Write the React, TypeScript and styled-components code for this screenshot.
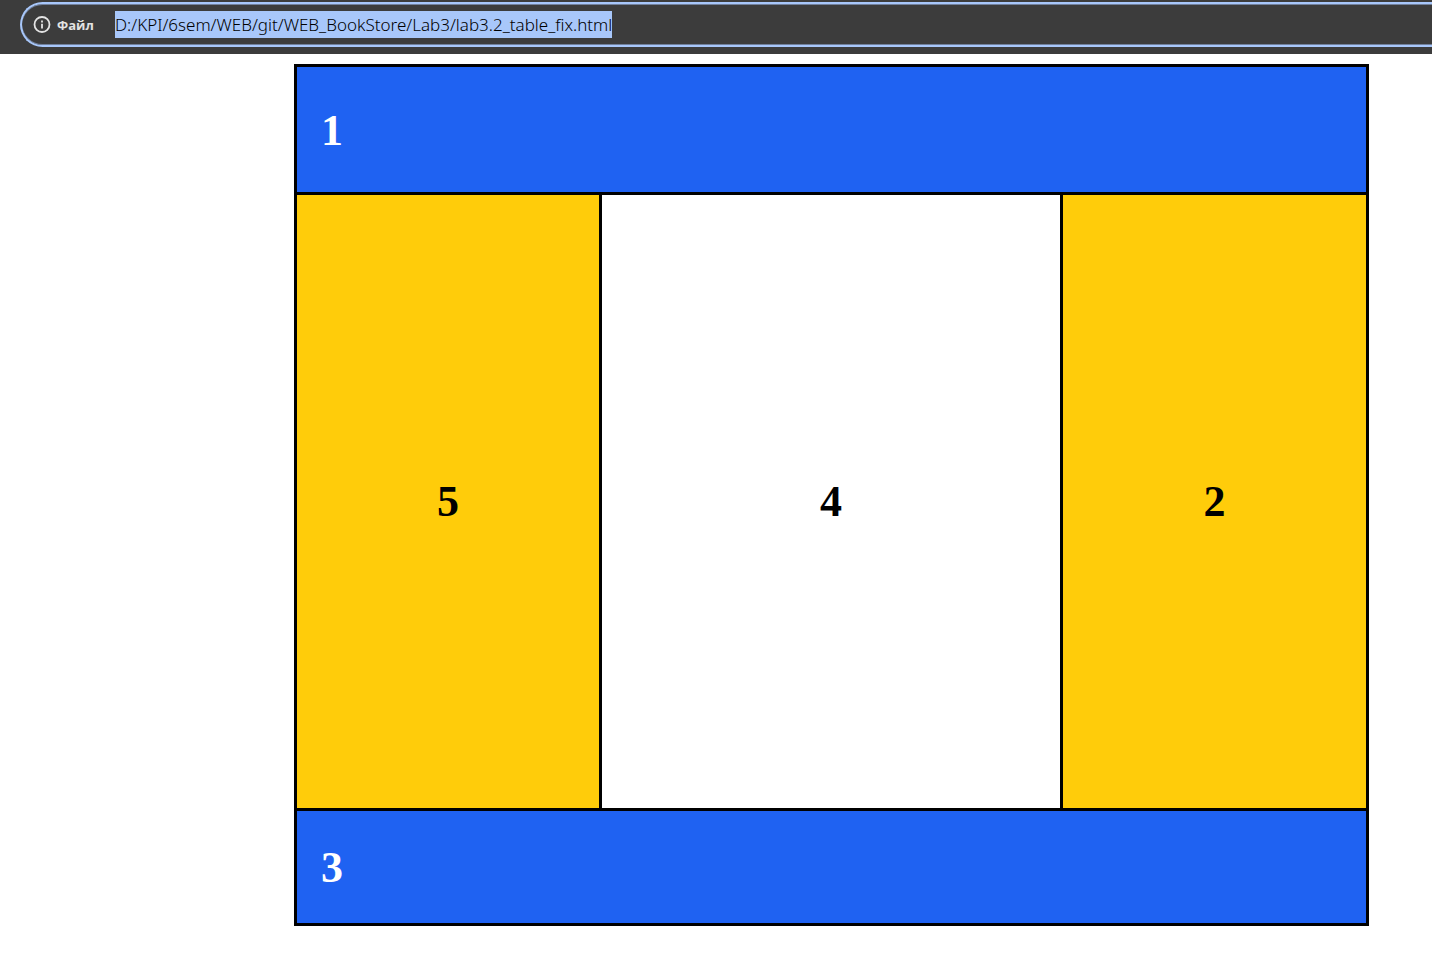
import styled, { createGlobalStyle } from "styled-components";

const GlobalStyle = createGlobalStyle`
  *, *::before, *::after { box-sizing: border-box; }
  body { margin: 0; background: #ffffff; }
`;

const BrowserBar = styled.header`
  display: flex;
  height: 54px;
  padding: 2px 0 7px 20px;
  background: #3c3c3c;
`;

const AddressBox = styled.form`
  display: flex;
  flex: 1;
  min-width: 0;
  align-items: center;
  padding-left: 11px;
  border: 2px solid #a8c7fa;
  border-right: 0;
  border-radius: 23px 0 0 23px;
  box-shadow: inset 0 1px #72819c, inset 0 -1px #72819c;
`;

const SchemeButton = styled.button`
  display: flex;
  flex: none;
  align-items: center;
  gap: 6px;
  width: 82px;
  padding: 0;
  border: 0;
  background: none;
  color: #e3e3e3;
  font: 700 13px/18px "Open Sans", sans-serif;
`;

const AddressInput = styled.input`
  field-sizing: content;
  min-width: 0;
  max-width: 100%;
  height: 27px;
  padding: 0;
  border: 0;
  outline: 0;
  background: #a8c7fa;
  color: #000000;
  font: 300 17px/27px "Noto Sans", sans-serif;
`;

const Page = styled.div`
  padding: 10px 63px 29px 294px;
`;

const Layout = styled.div`
  display: grid;
  grid-template-columns: 302fr 458fr 303fr;
  grid-template-rows: 125px 613px 112px;
  gap: 3px;
  border: 3px solid #000000;
  background: #000000;
`;

const tones = {
  blue: { background: "#1f62f2", color: "#ffffff" },
  yellow: { background: "#ffcc0a", color: "#000000" },
  white: { background: "#ffffff", color: "#000000" },
};

const Cell = styled.section<{ $tone: keyof typeof tones; $wide?: boolean }>`
  display: flex;
  align-items: center;
  justify-content: ${(p) => (p.$wide ? "flex-start" : "center")};
  grid-column: ${(p) => (p.$wide ? "1 / -1" : "auto")};
  padding: ${(p) => (p.$wide ? "2px 24px 0" : "0")};
  background: ${(p) => tones[p.$tone].background};
  color: ${(p) => tones[p.$tone].color};
  font: 700 44px/50px "Liberation Serif", "Times New Roman", serif;
`;

function InfoIcon() {
  return (
    <svg width="18" height="18" viewBox="0 0 18 18" fill="none" aria-hidden="true">
      <circle cx="9" cy="8.5" r="7.5" stroke="currentColor" strokeWidth="1.8" />
      <path d="M9 7.7v4.8M9 4.6v1.8" stroke="currentColor" strokeWidth="1.8" />
    </svg>
  );
}

export default function App() {
  return (
    <>
      <GlobalStyle />
      <BrowserBar>
        <AddressBox onSubmit={(e) => e.preventDefault()}>
          <SchemeButton type="button">
            <InfoIcon />
            Файл
          </SchemeButton>
          <AddressInput
            aria-label="URL"
            spellCheck={false}
            defaultValue="D:/KPI/6sem/WEB/git/WEB_BookStore/Lab3/lab3.2_table_fix.html"
          />
        </AddressBox>
      </BrowserBar>
      <Page>
        <Layout>
          <Cell $tone="blue" $wide>1</Cell>
          <Cell $tone="yellow">5</Cell>
          <Cell $tone="white">4</Cell>
          <Cell $tone="yellow">2</Cell>
          <Cell $tone="blue" $wide>3</Cell>
        </Layout>
      </Page>
    </>
  );
}
